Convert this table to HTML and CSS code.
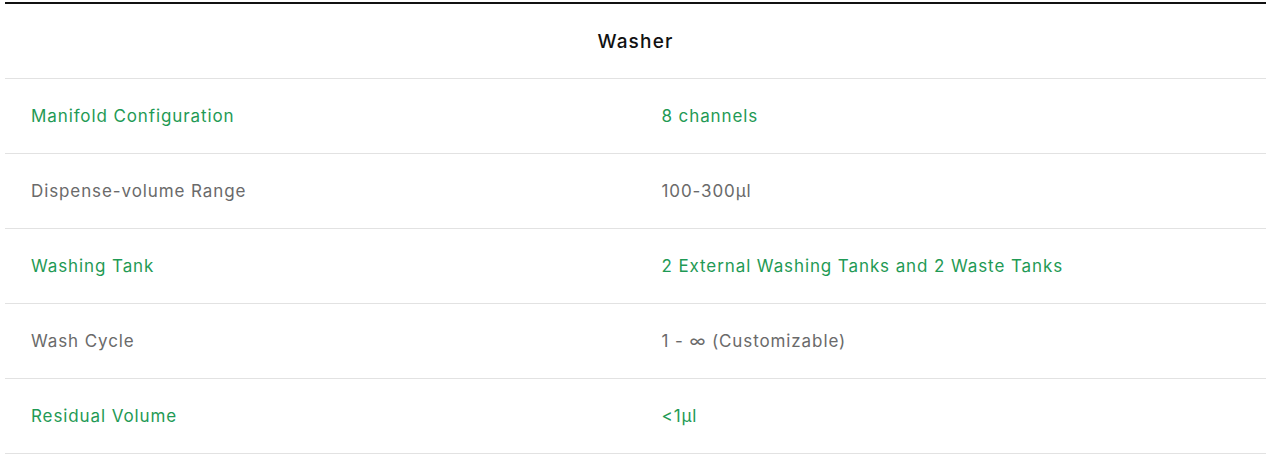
FILE: index.html
```html
<!DOCTYPE html>
<html lang="en">
<head>
<meta charset="utf-8">
<title>Washer</title>
<link rel="stylesheet" href="styles.css">
</head>
<body>
<div class="wrap">
  <table class="spec">
    <thead>
      <tr><th colspan="2">Washer</th></tr>
    </thead>
    <tbody>
      <tr class="odd"><td>Manifold Configuration</td><td>8 channels</td></tr>
      <tr class="even"><td>Dispense-volume Range</td><td>100-300μl</td></tr>
      <tr class="odd"><td>Washing Tank</td><td>2 External Washing Tanks and 2 Waste Tanks</td></tr>
      <tr class="even"><td>Wash Cycle</td><td>1 - ∞ (Customizable)</td></tr>
      <tr class="odd"><td>Residual Volume</td><td>&lt;1μl</td></tr>
    </tbody>
  </table>
</div>
</body>
</html>
```
FILE: styles.css
```css
html, body {
  margin: 0;
  background: #fff;
}
.wrap {
  padding: 2px 10px 0 5px;
}
.spec {
  width: 100%;
  border-collapse: collapse;
  table-layout: fixed;
  font-family: Inter, "Open Sans", sans-serif;
  font-size: 17px;
  letter-spacing: 0.9px;
  border-top: 2px solid #111;
}
.spec th {
  height: 74px;
  padding: 0;
  font-weight: 500;
  font-size: 19px;
  letter-spacing: 1.2px;
  color: #111;
  text-align: center;
  border-bottom: 1px solid #e2e2e2;
}
.spec td {
  width: 50%;
  height: 74px;
  padding: 0 26px;
  border-bottom: 1px solid #e2e2e2;
  font-weight: 400;
}
.spec tr.odd td {
  color: #1f9a55;
}
.spec tr.even td {
  color: #6a6a6a;
}
```
